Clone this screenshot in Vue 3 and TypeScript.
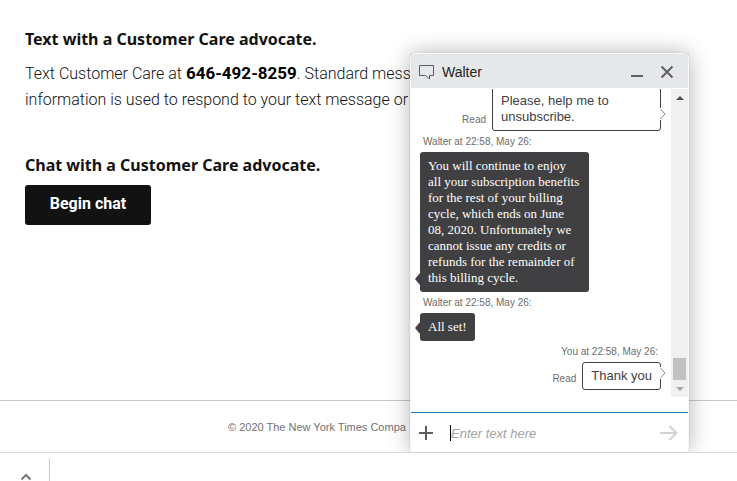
<script setup lang="ts">
import { onMounted, ref } from 'vue'

interface Message {
  id: number
  own: boolean
  stamp: string
  text: string
}

const messages: Message[] = [
  { id: 1, own: true, stamp: '', text: 'Please, help me to unsubscribe.' },
  {
    id: 2,
    own: false,
    stamp: 'Walter at 22:58, May 26:',
    text: 'You will continue to enjoy all your subscription benefits for the rest of your billing cycle, which ends on June 08, 2020. Unfortunately we cannot issue any credits or refunds for the remainder of this billing cycle.',
  },
  { id: 3, own: false, stamp: 'Walter at 22:58, May 26:', text: 'All set!' },
  { id: 4, own: true, stamp: 'You at 22:58, May 26:', text: 'Thank you' },
]

const draft = ref('')
const field = ref<HTMLInputElement | null>(null)

onMounted(() => field.value?.focus())
</script>

<template>
  <div class="window">
    <div class="view">
      <main class="content">
        <section>
          <h2>Text with a Customer Care advocate.</h2>
          <p>
            Text Customer Care at <strong>646-492-8259</strong>. Standard mess<br />
            information is used to respond to your text message or
          </p>
        </section>
        <section>
          <h2>Chat with a Customer Care advocate.</h2>
          <button class="begin" type="button">Begin chat</button>
        </section>
      </main>
      <footer class="footer">© 2020 The New York Times Compa</footer>

      <aside class="chat" aria-label="Chat with Walter">
        <header class="chat-head">
          <svg width="16" height="16" viewBox="0 0 16 16" aria-hidden="true">
            <path d="M1.5 1.5h14v10h-4v3.500l-4-3.500h-6z" fill="none" stroke="#5c5d60" stroke-linejoin="round" />
          </svg>
          <span class="name">Walter</span>
          <button type="button" aria-label="Minimize">
            <svg width="14" height="14" viewBox="0 0 14 14"><path d="M1 11h12" stroke="#5f6063" stroke-width="2" /></svg>
          </button>
          <button type="button" aria-label="Close">
            <svg width="14" height="14" viewBox="0 0 14 14"><path d="M1.5 1.5l11 11M12.5 1.5l-11 11" stroke="#5f6063" stroke-width="2" /></svg>
          </button>
        </header>

        <div class="log">
          <div class="messages">
            <div v-for="m in messages" :key="m.id" class="message" :class="{ own: m.own }">
              <div v-if="m.stamp" class="stamp">{{ m.stamp }}</div>
              <div class="line">
                <span v-if="m.own" class="read">Read</span>
                <div class="bubble">
                  {{ m.text }}
                  <svg v-if="m.own" class="tail" width="6" height="12" viewBox="0 0 6 12" aria-hidden="true">
                    <path d="M0 0h1l4 6-4 6H0z" fill="#fff" />
                    <path d="M.5 1l4.500 5-4.500 5" fill="none" stroke="#88898c" />
                  </svg>
                  <svg v-else class="tail" width="5" height="12" viewBox="0 0 5 12" aria-hidden="true">
                    <path d="M5 0L0 6l5 6z" fill="#404042" />
                  </svg>
                </div>
              </div>
            </div>
          </div>
          <div class="scrollbar" aria-hidden="true">
            <svg width="17" height="17" viewBox="0 0 17 17"><path d="M5 11l4-4 4 4z" fill="#505050" /></svg>
            <div class="thumb"></div>
            <svg width="17" height="17" viewBox="0 0 17 17"><path d="M5 7l4 4 4-4z" fill="#a3a3a3" /></svg>
          </div>
        </div>

        <form class="entry" @submit.prevent>
          <button type="button" aria-label="Add attachment">
            <svg width="16" height="16" viewBox="0 0 16 16"><path d="M8 1v14M1 8h14" stroke="#5c5d60" stroke-width="2" /></svg>
          </button>
          <div class="field">
            <input ref="field" v-model="draft" type="text" placeholder="Enter text here" aria-label="Enter text here" />
          </div>
          <button type="submit" aria-label="Send">
            <svg width="18" height="16" viewBox="0 0 18 16"><path d="M0 8h16M9.5 1L16.500 8l-7 7" fill="none" stroke="#d2d2d2" stroke-width="2" /></svg>
          </button>
        </form>
      </aside>
    </div>

    <div class="shelf">
      <button type="button" aria-label="Expand">
        <svg width="12" height="8" viewBox="0 0 12 8"><path d="M1.5 6.500L6 2l4.500 4.500" fill="none" stroke="#77787a" stroke-width="2" /></svg>
      </button>
      <span class="rule"></span>
    </div>
  </div>
</template>

<style>
body {
  margin: 0;
  background: #fff;
}
</style>

<style scoped>
* {
  box-sizing: border-box;
}

button {
  display: flex;
  padding: 0;
  border: 0;
  background: none;
}

.window {
  display: flex;
  flex-direction: column;
  height: 100vh;
  overflow: hidden;
  font-family: 'Liberation Sans', Arial, sans-serif;
}

.view {
  position: relative;
  display: flex;
  flex: 1;
  flex-direction: column;
  min-height: 0;
  overflow: hidden;
  border-bottom: 1px solid #d9d9d9;
}

.content {
  display: flex;
  flex: 1;
  flex-direction: column;
  gap: 39px;
  padding: 26px 25px 0;
  font-family: Roboto, sans-serif;
  white-space: nowrap;
}

h2 {
  margin: 0 0 7px;
  color: #121212;
  font-family: 'Noto Sans', sans-serif;
  font-size: 16px;
  font-weight: 700;
  line-height: 26px;
}

p {
  margin: 8px 0 0;
  color: #121212;
  font-size: 16px;
  font-weight: 300;
  line-height: 26px;
}

strong {
  color: #000;
  font-size: 17px;
  font-weight: 700;
}

.begin {
  align-items: center;
  justify-content: center;
  width: 126px;
  height: 40px;
  padding-bottom: 4px;
  border-radius: 3px;
  background: #121212;
  color: #fff;
  font-family: inherit;
  font-size: 16px;
  font-weight: 700;
}

.footer {
  height: 52px;
  padding-left: 228px;
  border-top: 1px solid #c7c7c7;
  color: #727272;
  font-size: 11px;
  line-height: 52px;
}

.chat {
  position: absolute;
  top: 53px;
  right: 48px;
  bottom: 0;
  display: flex;
  flex-direction: column;
  width: 279px;
  border: 1px solid #f7f7f7;
  border-radius: 4px 4px 0 0;
  background: #fff;
  box-shadow: 0 0 1px #999, 0 0 22px rgba(0, 0, 0, 0.3);
}

.chat-head {
  display: flex;
  flex: none;
  align-items: center;
  gap: 16px;
  height: 34px;
  padding: 2px 14px 0 7px;
  background: #e6e7e9;
  border-radius: 3px 3px 0 0;
}

.name {
  flex: 1;
  margin-left: -8px;
  color: #222;
  font-size: 14px;
}

.log {
  display: flex;
  flex: 1;
  min-height: 0;
  padding: 1px 0 15px;
}

.messages {
  display: flex;
  flex: 1;
  flex-direction: column;
  justify-content: flex-end;
  gap: 5px;
  overflow: hidden;
  padding: 0 10px 7px 9px;
}

.message {
  display: flex;
  flex: none;
  flex-direction: column;
  align-items: flex-start;
  color: #6b6c6e;
  font-size: 10px;
}

.own {
  align-items: flex-end;
}

.stamp {
  padding: 0 3px 4px;
  line-height: 12px;
}

.line {
  display: flex;
  align-items: flex-end;
  gap: 6px;
}

.read {
  line-height: 23px;
}

.bubble {
  position: relative;
  max-width: 169px;
  padding: 6px 8px;
  border-radius: 3px;
  background: #404042;
  color: #fff;
  font-family: 'Liberation Serif', 'Times New Roman', serif;
  font-size: 13px;
  line-height: 16px;
}

.own .bubble {
  padding: 5px 8px;
  border: 1px solid #404042;
  background: #fff;
  color: #404042;
  font-family: 'Liberation Sans', Arial, sans-serif;
}

.tail {
  position: absolute;
  bottom: 7px;
  left: -5px;
}

.own .tail {
  right: -6px;
  bottom: 10px;
  left: auto;
}

.scrollbar {
  display: flex;
  flex: none;
  flex-direction: column;
  justify-content: flex-end;
  width: 17px;
  background: #f0f0f0;
}

.scrollbar svg:first-child {
  margin-bottom: auto;
}

.thumb {
  height: 22px;
  margin: 0 2px;
  background: #c1c1c1;
}

.entry {
  display: flex;
  flex: none;
  align-items: center;
  gap: 16px;
  height: 39px;
  padding: 2px 10px 0 7px;
  border-top: 1px solid #2b7cb3;
}

.field {
  flex: 1;
  min-width: 0;
}

input {
  display: block;
  width: 100%;
  height: 16px;
  padding: 0;
  border: 0;
  border-left: 1px solid #000;
  outline: 0;
  background: none;
  caret-color: transparent;
  color: #333;
  font-family: inherit;
  font-size: 13px;
}

input::placeholder {
  color: #a3a3a3;
  font-style: italic;
}

.shelf {
  display: flex;
  flex: none;
  align-items: flex-end;
  gap: 17px;
  height: 28px;
  padding-left: 20px;
}

.rule {
  width: 1px;
  height: 22px;
  background: #c9c9c9;
}
</style>
